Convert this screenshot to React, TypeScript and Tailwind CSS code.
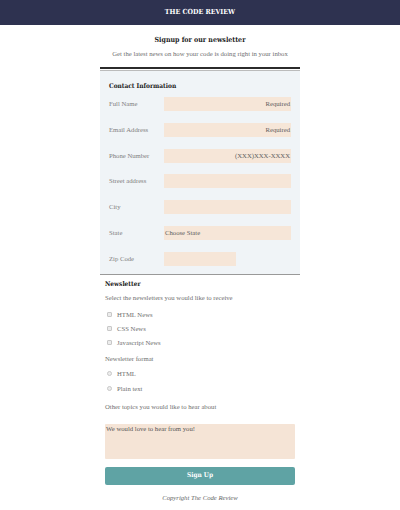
import React from 'react'

const head = { fontFamily: '"DejaVu Serif Condensed", "DejaVu Serif", serif' }
const body = { fontFamily: '"Liberation Serif", serif' }

const fields = [
  { label: 'Full Name', hint: 'Required', right: true },
  { label: 'Email Address', hint: 'Required', right: true },
  { label: 'Phone Number', hint: '(XXX)XXX-XXXX', right: true },
  { label: 'Street address', hint: '' },
  { label: 'City', hint: '' },
  { label: 'State', hint: 'Choose State' },
  { label: 'Zip Code', hint: '', short: true },
]

function Box({ round }: { round?: boolean }) {
  return (
    <span
      className={`inline-block w-[5px] h-[5px] border border-[#c8c8c8] bg-[#ececec] ${round ? 'rounded-full' : 'rounded-[1px]'}`}
    />
  )
}

export default function App() {
  return (
    <div className="w-[400px] h-[510px] bg-white text-[#555]" style={body}>
      <header className="h-[25px] bg-[#2e3250] flex items-center justify-center">
        <span className="text-white text-[7px] font-bold" style={head}>
          THE CODE REVIEW
        </span>
      </header>

      <div className="w-[200px] mx-auto">
        <h1 className="text-center text-[7px] font-bold text-[#222] mt-[11px] leading-[8px]" style={head}>
          Signup for our newsletter
        </h1>
        <p className="text-center text-[6.7px] text-[#6f6f6f] mt-[6px] leading-[8px]">
          Get the latest news on how your code is doing right in your inbox
        </p>

        <div className="mt-[9px] border-t-[2px] border-[#2b2b2b]">
          <div className="mt-[1px] border-t border-[#bbb] border-b-[1.5px] border-b-[#999] bg-[#f0f4f7] px-[9px] pt-[11px] pb-[8px]">
            <h2 className="text-[6.5px] font-bold text-[#222] leading-[8px]" style={head}>
              Contact Information
            </h2>
            <div className="mt-[7px] flex flex-col gap-[11.8px]">
              {fields.map((f) => (
                <div key={f.label} className="flex items-center h-[14px]">
                  <span className="w-[55px] text-[6.7px] text-[#808080]">{f.label}</span>
                  <div
                    className={`h-[14px] bg-[#f6e6d8] flex items-center px-[1px] text-[6.7px] text-[#606060] ${
                      f.short ? 'w-[72px]' : 'flex-1'
                    } ${f.right ? 'justify-end' : 'justify-start'}`}
                  >
                    {f.hint}
                  </div>
                </div>
              ))}
            </div>
          </div>
        </div>

        <div className="px-[5px]">
          <h2 className="mt-[5px] text-[6.5px] font-bold text-[#222] leading-[8px]" style={head}>
            Newsletter
          </h2>
          <p className="mt-[6px] text-[6.7px] text-[#6f6f6f] leading-[8px]">
            Select the newsletters you would like to receive
          </p>
          <div className="mt-[9px] flex flex-col gap-[6px] text-[6.7px] text-[#6f6f6f]">
            {['HTML News', 'CSS News', 'Javascript News'].map((n) => (
              <div key={n} className="flex items-center gap-[5px] pl-[2px] h-[8px]">
                <Box />
                <span>{n}</span>
              </div>
            ))}
          </div>
          <p className="mt-[8px] text-[6.7px] text-[#6f6f6f] leading-[8px]">Newsletter format</p>
          <div className="mt-[7px] flex flex-col gap-[7px] text-[6.7px] text-[#6f6f6f]">
            {['HTML', 'Plain text'].map((n) => (
              <div key={n} className="flex items-center gap-[5px] pl-[2px] h-[8px]">
                <Box round />
                <span>{n}</span>
              </div>
            ))}
          </div>
          <p className="mt-[10px] text-[6.7px] text-[#6f6f6f] leading-[8px]">
            Other topics you would like to hear about
          </p>
          <div className="mt-[13px] h-[35px] bg-[#f5e4d6] rounded-[1px] px-[1px] pt-[1px] text-[6.7px] text-[#555] leading-[8px]">
            We would love to hear from you!
          </div>
          <button
            type="button"
            className="mt-[8px] w-full h-[18px] rounded-[2px] bg-[#5fa3a4] text-white text-[6.5px] font-bold"
            style={head}
          >
            Sign Up
          </button>
          <p className="mt-[8px] text-center text-[6.7px] italic text-[#666]">Copyright The Code Review</p>
        </div>
      </div>
    </div>
  )
}
